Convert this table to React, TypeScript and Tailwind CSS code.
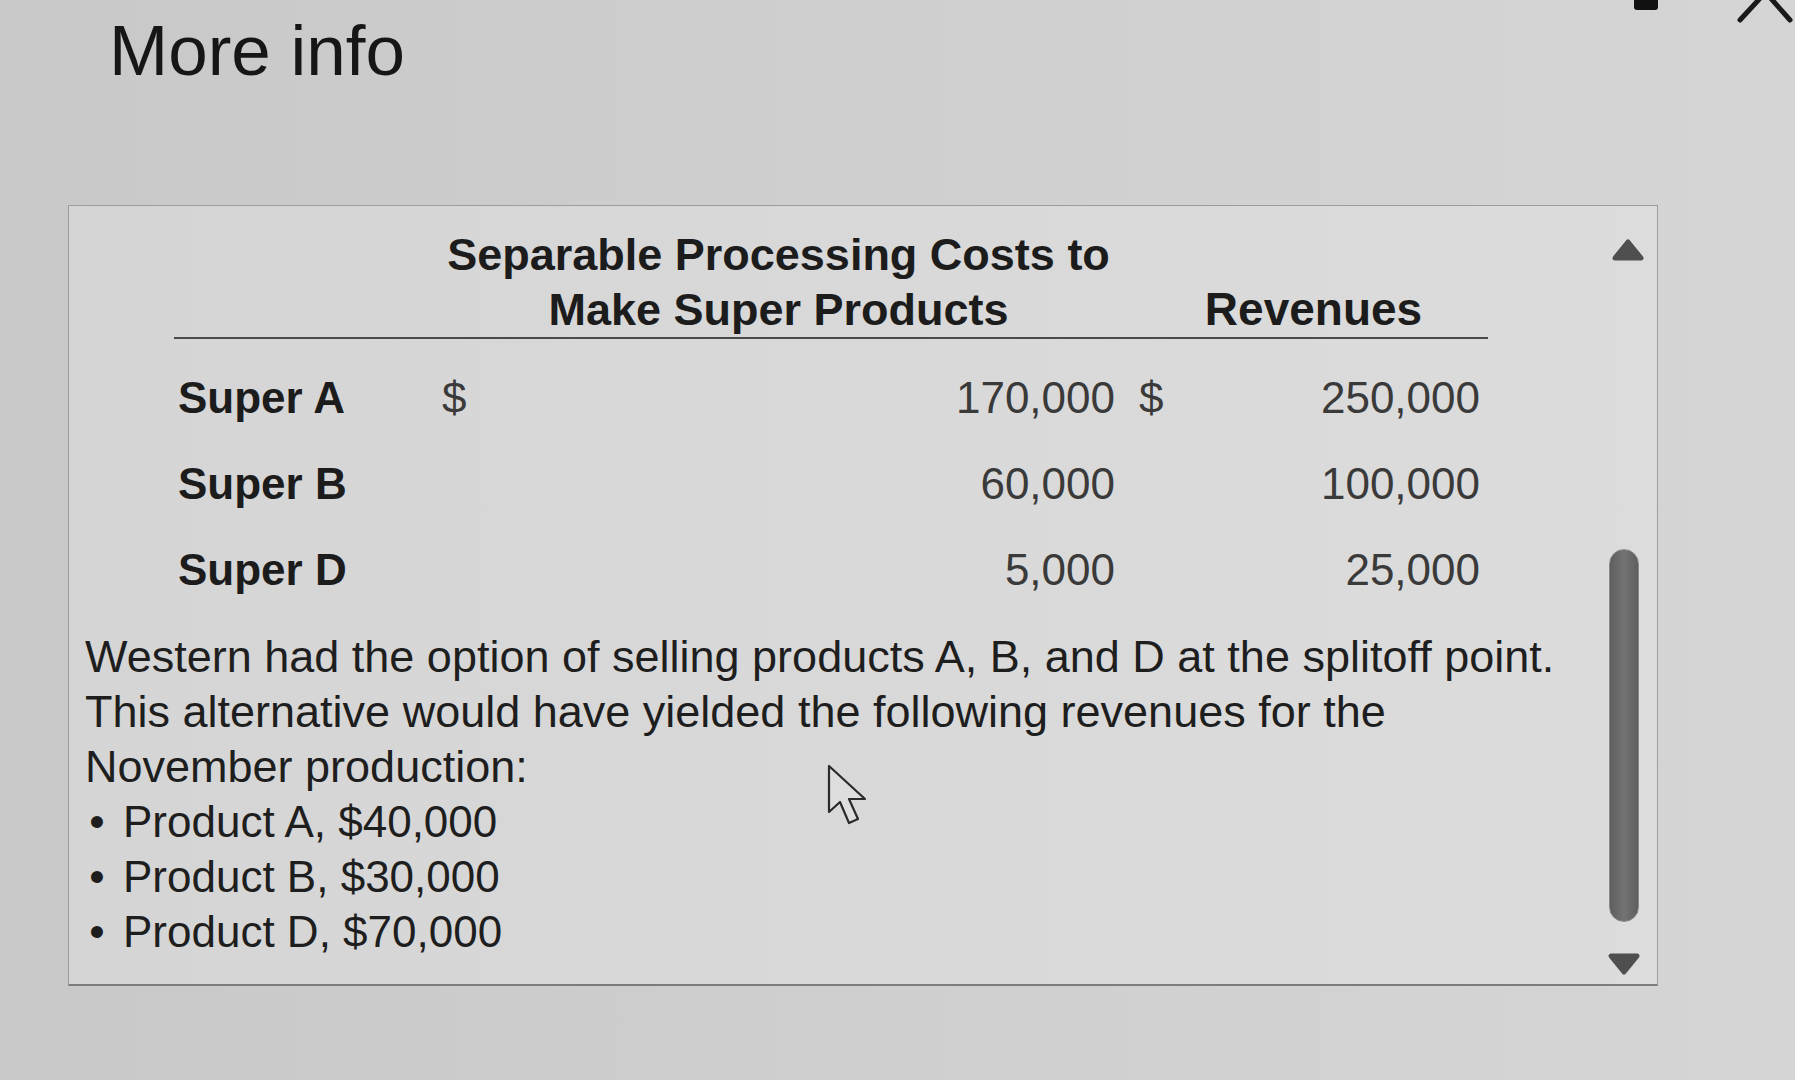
import React from "react";

function TriUp() {
  return (
    <svg width="34" height="24" viewBox="0 0 34 24">
      <path d="M17 4 L30 20 L4 20 Z" fill="#4f4f4f" stroke="#4f4f4f" strokeWidth="5" strokeLinejoin="round" />
    </svg>
  );
}

function TriDown() {
  return (
    <svg width="34" height="24" viewBox="0 0 34 24">
      <path d="M4 4 L30 4 L17 20 Z" fill="#4f4f4f" stroke="#4f4f4f" strokeWidth="5" strokeLinejoin="round" />
    </svg>
  );
}

function Cursor() {
  return (
    <svg width="48" height="66" viewBox="0 0 48 66">
      <path
        d="M3 3 L3 49 L14 39 L23 60 L32 56 L23 36 L39 36 Z"
        fill="#dedede"
        stroke="#2a2a2a"
        strokeWidth="2.2"
        strokeLinejoin="round"
      />
    </svg>
  );
}

export default function App() {
  const rows = [
    { label: "Super A", d1: "$", n1: "170,000", d2: "$", n2: "250,000" },
    { label: "Super B", d1: "", n1: "60,000", d2: "", n2: "100,000" },
    { label: "Super D", d1: "", n1: "5,000", d2: "", n2: "25,000" },
  ];
  return (
    <div className="relative w-[1795px] h-[1080px] overflow-hidden bg-gradient-to-r from-[#c8c8c8] via-[#cfcfcf] to-[#d5d5d5] font-['Liberation_Sans',Arial,sans-serif] text-[#1c1c1c]">
      <div className="pt-[11px] pl-[109px] text-[71px] leading-[80px] text-[#161616]">More info</div>

      <div className="mt-[114px] ml-[68px] w-[1590px] flex border border-[#9c9c9c] border-b-2 border-b-[#7c7c7c] bg-gradient-to-r from-[#d5d5d5] to-[#dcdcdc]">
        <div className="flex-1 pt-[21px] pl-[16px] pb-[25px] text-[44px] leading-[55px]">
          <div className="ml-[89px] grid grid-cols-[268px_28px_645px_55px_310px_8px] gap-y-[31px]">
            <div className="border-b-2 border-[#4a4a4a]" />
            <div className="col-span-2 border-b-2 border-[#4a4a4a] text-center text-[45px] font-bold whitespace-nowrap">
              Separable Processing Costs to
              <br />
              Make Super Products
            </div>
            <div className="col-span-3 border-b-2 border-[#4a4a4a] pl-[24px] flex items-end justify-center text-[46px] font-bold">
              Revenues
            </div>
            {rows.map((r) => (
              <React.Fragment key={r.label}>
                <div className="pl-[4px] font-bold whitespace-nowrap">{r.label}</div>
                <div className="text-[#3a3a3a]">{r.d1}</div>
                <div className="text-right text-[#3a3a3a]">{r.n1}</div>
                <div className="pl-[24px] text-[#3a3a3a]">{r.d2}</div>
                <div className="text-right text-[#3a3a3a]">{r.n2}</div>
                <div />
              </React.Fragment>
            ))}
          </div>

          <div className="mt-[32px] whitespace-nowrap text-[45px] text-[#1e1e1e]">
            Western had the option of selling products A, B, and D at the splitoff point.
            <br />
            This alternative would have yielded the following revenues for the
            <br />
            November production:
          </div>
          <ul className="text-[#1e1e1e]">
            {["Product A, $40,000", "Product B, $30,000", "Product D, $70,000"].map((t) => (
              <li key={t} className="flex whitespace-nowrap">
                <span className="w-[24px] mr-[14px] text-center">•</span>
                <span>{t}</span>
              </li>
            ))}
          </ul>
        </div>

        <div className="w-[42px] mr-[12px] flex flex-col items-center pt-[32px]">
          <div className="ml-[8px]">
            <TriUp />
          </div>
          <div className="mt-[287px] w-[30px] h-[373px] rounded-full bg-gradient-to-r from-[#5e5e5e] via-[#747474] to-[#5e5e5e] border border-[#8a8a8a]" />
          <div className="mt-[30px]">
            <TriDown />
          </div>
        </div>
      </div>

      <div className="absolute left-[826px] top-[763px]">
        <Cursor />
      </div>

      <div className="absolute left-[1634px] top-0 w-[24px] h-[10px] bg-[#111] rounded-b-[3px]" />
      <svg className="absolute left-[1734px] top-0" width="61" height="26" viewBox="0 0 61 26">
        <path d="M6 20 L30 -6 M33 -6 L56 20" stroke="#1a1a1a" strokeWidth="5" strokeLinecap="round" fill="none" />
      </svg>
    </div>
  );
}
